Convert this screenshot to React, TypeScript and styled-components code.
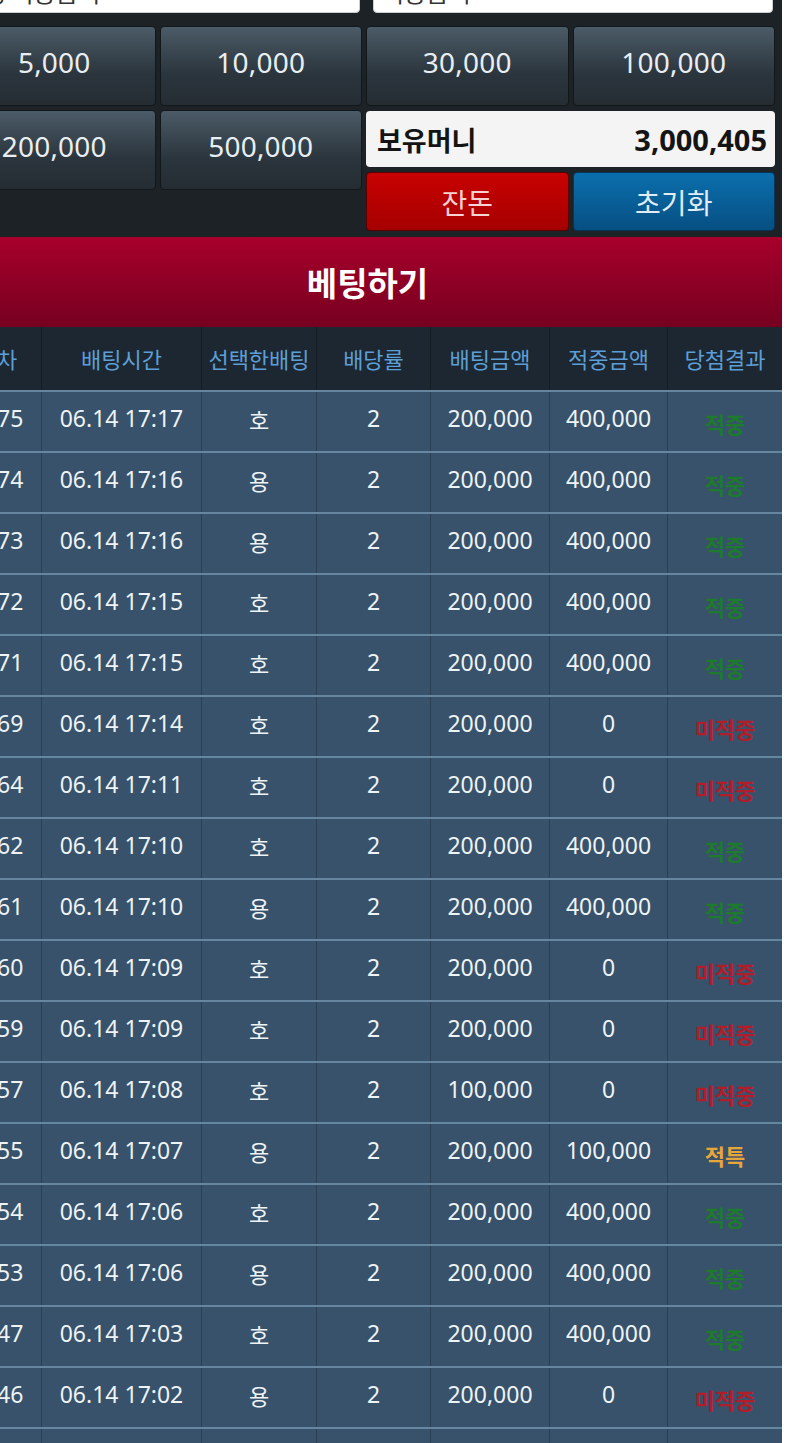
import React from "react";
import styled, { createGlobalStyle } from "styled-components";

const Global = createGlobalStyle`
  html, body { margin: 0; padding: 0; background: #ffffff; overflow-x: hidden; }
  body { font-family: "Noto Sans", "Noto Sans CJK KR", sans-serif; }
  * { box-sizing: border-box; }
`;

const Page = styled.div`
  width: 829px;
  margin-left: -47px;
  margin-top: -37px;
  font-family: "Noto Sans", "Noto Sans CJK KR", sans-serif;
`;

const Panel = styled.div`
  background: #1d2226;
  padding: 6px 7px 6px 0;
  display: flex;
  flex-direction: column;
  gap: 13px;
`;

const InputRow = styled.div`
  display: grid;
  grid-template-columns: 407px 1fr;
  gap: 13px;
  padding-right: 2px;
`;

const Input = styled.div`
  height: 44px;
  background: #ffffff;
  border-radius: 4px;
  border: 1px solid #c9ced2;
  display: flex;
  align-items: center;
  padding: 0 8px;
  font-size: 24px;
  color: #333;
  font-family: "Noto Sans CJK KR", "Noto Sans", sans-serif;
`;

const Grid = styled.div`
  display: grid;
  grid-template-columns: repeat(4, 1fr);
  grid-template-rows: 80px 80px 37px;
  gap: 4px;
`;

const ChipButton = styled.div`
  background: linear-gradient(#4b5b67, #2b353d 60%, #252d33);
  border: 1px solid #12171a;
  border-radius: 4px;
  display: flex;
  align-items: center;
  justify-content: center;
  color: #e9eef2;
  font-size: 28px;
  letter-spacing: 0.2px;
  padding-bottom: 8px;
`;

const RightBlock = styled.div`
  grid-column: 3 / span 2;
  grid-row: 2 / span 2;
  display: flex;
  flex-direction: column;
  gap: 5px;
  padding-top: 1px;
`;

const Money = styled.div`
  height: 56px;
  background: #f4f4f4;
  border-radius: 4px;
  display: flex;
  align-items: center;
  justify-content: space-between;
  padding: 0 8px 0 11px;
  color: #141414;
  font-weight: 700;
  font-family: "Noto Sans", "Noto Sans CJK KR", sans-serif;
`;

const MoneyLabel = styled.span`
  font-size: 27px;
  font-family: "Noto Sans CJK KR", sans-serif;
`;

const MoneyValue = styled.span`
  font-size: 29px;
`;

const ActionRow = styled.div`
  display: grid;
  grid-template-columns: 1fr 1fr;
  gap: 4px;
  height: 59px;
`;

const Action = styled.div<{ $tone: "red" | "blue" }>`
  border-radius: 4px;
  display: flex;
  align-items: center;
  justify-content: center;
  font-size: 28px;
  font-family: "Noto Sans CJK KR", sans-serif;
  background: ${(p) =>
    p.$tone === "red"
      ? "linear-gradient(#c80101, #a50000)"
      : "linear-gradient(#0b6fad, #064f82)"};
  border: 1px solid ${(p) => (p.$tone === "red" ? "#5a0000" : "#06355a")};
  color: ${(p) => (p.$tone === "red" ? "#f6d2d2" : "#e1ecf5")};
`;

const Banner = styled.div`
  height: 90px;
  background: linear-gradient(#a7002b, #8a0024 60%, #760020);
  display: flex;
  align-items: center;
  justify-content: center;
  color: #ffffff;
  font-size: 33px;
  font-weight: 700;
  font-family: "Noto Sans CJK KR", sans-serif;
`;

const Table = styled.div`
  display: flex;
  flex-direction: column;
`;

const cols = "88px 160px 115px 114px 119px 118px 115px";

const HeadRow = styled.div`
  display: grid;
  grid-template-columns: ${cols};
  height: 63px;
  background: #1c2731;
`;

const HeadCell = styled.div`
  display: flex;
  align-items: center;
  justify-content: center;
  color: #5c9fd6;
  font-size: 22px;
  font-family: "Noto Sans CJK KR", sans-serif;
  border-left: 1px solid #151d24;
  padding-bottom: 2px;
  white-space: nowrap;
  &:first-child { border-left: none; }
`;

const Row = styled.div`
  display: grid;
  grid-template-columns: ${cols};
  height: 61px;
  background: #37526a;
  border-top: 2px solid #6686a0;
`;

const Cell = styled.div`
  display: flex;
  align-items: center;
  justify-content: center;
  color: #eef3f6;
  font-size: 23px;
  border-left: 1px solid #2a3f52;
  padding-bottom: 8px;
  &:first-child { border-left: none; }
`;

const Pick = styled(Cell)`
  font-family: "Noto Sans CJK KR", sans-serif;
  font-size: 22px;
  padding-bottom: 5px;
`;

const Result = styled(Cell)<{ $r: string }>`
  font-family: "Noto Sans CJK KR", sans-serif;
  font-size: 22px;
  font-weight: 700;
  padding-bottom: 0;
  padding-top: 2px;
  color: ${(p) =>
    p.$r === "적중" ? "#1e7a2c" : p.$r === "적특" ? "#e7a63a" : "#b21d2b"};
`;

type R = [string, string, string, string, string, string];

const rows: R[] = [
  ["1175", "06.14 17:17", "호", "200,000", "400,000", "적중"],
  ["1174", "06.14 17:16", "용", "200,000", "400,000", "적중"],
  ["1173", "06.14 17:16", "용", "200,000", "400,000", "적중"],
  ["1172", "06.14 17:15", "호", "200,000", "400,000", "적중"],
  ["1171", "06.14 17:15", "호", "200,000", "400,000", "적중"],
  ["1169", "06.14 17:14", "호", "200,000", "0", "미적중"],
  ["1164", "06.14 17:11", "호", "200,000", "0", "미적중"],
  ["1162", "06.14 17:10", "호", "200,000", "400,000", "적중"],
  ["1161", "06.14 17:10", "용", "200,000", "400,000", "적중"],
  ["1160", "06.14 17:09", "호", "200,000", "0", "미적중"],
  ["1159", "06.14 17:09", "호", "200,000", "0", "미적중"],
  ["1157", "06.14 17:08", "호", "100,000", "0", "미적중"],
  ["1155", "06.14 17:07", "용", "200,000", "100,000", "적특"],
  ["1154", "06.14 17:06", "호", "200,000", "400,000", "적중"],
  ["1153", "06.14 17:06", "용", "200,000", "400,000", "적중"],
  ["1147", "06.14 17:03", "호", "200,000", "400,000", "적중"],
  ["1146", "06.14 17:02", "용", "200,000", "0", "미적중"],
  ["1145", "06.14 17:01", "호", "200,000", "400,000", "적중"],
];

const heads = ["회차", "배팅시간", "선택한배팅", "배당률", "배팅금액", "적중금액", "당첨결과"];

export default function App() {
  return (
    <>
      <Global />
      <Page>
        <Panel>
          <InputRow>
            <Input>배팅 적중금액</Input>
            <Input>적중금액</Input>
          </InputRow>
          <Grid>
            <ChipButton>5,000</ChipButton>
            <ChipButton>10,000</ChipButton>
            <ChipButton>30,000</ChipButton>
            <ChipButton>100,000</ChipButton>
            <ChipButton>200,000</ChipButton>
            <ChipButton>500,000</ChipButton>
            <RightBlock>
              <Money>
                <MoneyLabel>보유머니</MoneyLabel>
                <MoneyValue>3,000,405</MoneyValue>
              </Money>
              <ActionRow>
                <Action $tone="red">잔돈</Action>
                <Action $tone="blue">초기화</Action>
              </ActionRow>
            </RightBlock>
          </Grid>
        </Panel>
        <Banner>베팅하기</Banner>
        <Table>
          <HeadRow>
            {heads.map((h) => (
              <HeadCell key={h}>{h}</HeadCell>
            ))}
          </HeadRow>
          {rows.map((r) => (
            <Row key={r[0]}>
              <Cell>{r[0]}</Cell>
              <Cell>{r[1]}</Cell>
              <Pick>{r[2]}</Pick>
              <Cell>2</Cell>
              <Cell>{r[3]}</Cell>
              <Cell>{r[4]}</Cell>
              <Result $r={r[5]}>{r[5]}</Result>
            </Row>
          ))}
        </Table>
      </Page>
    </>
  );
}
